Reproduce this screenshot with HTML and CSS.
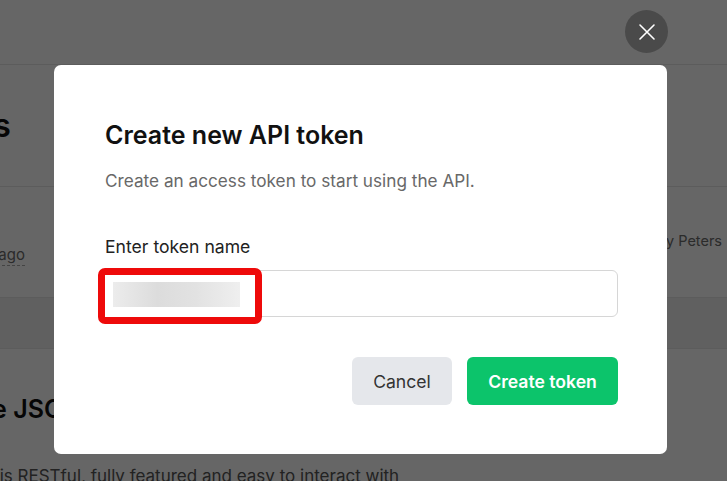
FILE: index.html
```html
<!DOCTYPE html>
<html lang="en">
<head>
<meta charset="UTF-8">
<meta name="viewport" content="width=device-width, initial-scale=1.0">
<title>API tokens</title>
<link rel="stylesheet" href="styles.css">
</head>
<body>

<!-- page behind the dialog -->
<div class="page">
  <header class="topbar"></header>

  <section class="page-head">
    <h1>API tokens</h1>
  </section>

  <div class="token-row">
    <span class="when">2 days ago</span>
    <span class="who">by Andy Peters</span>
  </div>
  <div class="token-row empty"></div>

  <section class="docs">
    <h2>Using the JSON API</h2>
    <p>The API is RESTful, fully featured and easy to interact with</p>
  </section>
</div>

<!-- dim layer + dialog -->
<div class="overlay">
  <button class="close-btn" aria-label="Close">
    <svg width="18" height="18" viewBox="0 0 18 18">
      <path d="M2 2 L16 16 M16 2 L2 16" stroke="#fff" stroke-width="1.6" stroke-linecap="round" fill="none"/>
    </svg>
  </button>

  <div class="modal">
    <h3 class="modal-title">Create new API token</h3>
    <p class="modal-sub">Create an access token to start using the API.</p>

    <label class="field-label" for="tokenName">Enter token name</label>
    <div class="field">
      <input id="tokenName" class="field-input" type="text">
      <!-- redaction mark -->
      <div class="redact"><span class="blur"></span></div>
    </div>

    <div class="actions">
      <button class="btn btn-cancel">Cancel</button>
      <button class="btn btn-create">Create token</button>
    </div>
  </div>
</div>

</body>
</html>
```

FILE: styles.css
```css
* {
  box-sizing: border-box;
}

body {
  margin: 0;
  font-family: Inter, "Noto Sans", sans-serif;
  background: #fff;
  overflow: hidden;
}

/* ---- background page ---- */
.page {
  width: 727px;
  height: 481px;
  overflow: hidden;
}

.topbar {
  height: 65px;
  border-bottom: 1px solid #e6e6e6;
}

.page-head {
  height: 122px;
  display: flex;
  align-items: center;
  margin-left: -154px;
  border-bottom: 1px solid #e6e6e6;
}
.page-head h1 {
  margin: 0;
  font-size: 32px;
  font-weight: 600;
  color: #111;
}

.token-row {
  height: 111px;
  display: flex;
  align-items: flex-end;
  justify-content: space-between;
  padding: 0 5px 31px 0;
  border-bottom: 1px solid #e6e6e6;
  margin-left: -53px;
  font-size: 15px;
  color: #6b6b6b;
}
.token-row .when {
  border-bottom: 1px dashed #aaa;
  line-height: 20px;
}
.token-row .who {
  font-size: 14.5px;
  margin-bottom: 17px;
}
.token-row.empty {
  height: 51px;
  background: #f1f1f1;
  padding: 0;
}

.docs {
  margin-left: -108px;
  padding-top: 45px;
}
.docs h2 {
  margin: 0;
  font-size: 25px;
  font-weight: 600;
  color: #111;
}
.docs p {
  margin: 42px 0 0 40px;
  font-size: 17px;
  color: #555;
  white-space: nowrap;
}

/* ---- dialog ---- */
.overlay {
  position: fixed;
  inset: 0;
  background: rgba(0, 0, 0, 0.6);
  display: flex;
  justify-content: center;
  align-items: flex-start;
  padding-top: 65px;
}

.close-btn {
  position: absolute;
  top: 10px;
  left: 625px;
  width: 43px;
  height: 43px;
  border-radius: 50%;
  border: none;
  background: #4a4a4a;
  display: flex;
  align-items: center;
  justify-content: center;
  padding: 0;
}

.modal {
  width: 613px;
  margin-left: -6px;
  background: #fff;
  border-radius: 7px;
  padding: 54px 49px 49px 51px;
}

.modal-title {
  margin: 0;
  font-size: 25px;
  line-height: 32px;
  font-weight: 600;
  color: #111;
}

.modal-sub {
  margin: 18px 0 0;
  font-size: 17.2px;
  line-height: 24px;
  color: #686868;
}

.field-label {
  display: block;
  margin-top: 42px;
  font-size: 17.6px;
  line-height: 24px;
  color: #222;
}

.field {
  position: relative;
  margin-top: 11px;
}

.field-input {
  display: block;
  width: 100%;
  height: 47px;
  border: 1px solid #d6d6d6;
  border-radius: 6px;
  font: inherit;
  padding: 0 14px;
}

.redact {
  position: absolute;
  left: -7px;
  top: -2px;
  width: 164px;
  height: 56px;
  border: 7px solid #ee0a0a;
  border-radius: 7px;
  background: #fff;
  padding: 7px 15px 10px 8px;
}
.redact .blur {
  display: block;
  width: 100%;
  height: 100%;
  background: linear-gradient(90deg, #ececec 0%, #dcdcdc 35%, #e2e2e2 65%, #efefef 100%);
}

.actions {
  display: flex;
  justify-content: flex-end;
  gap: 15px;
  margin-top: 40px;
}

.btn {
  height: 48px;
  border: none;
  border-radius: 6px;
  font-family: inherit;
  font-size: 17.6px;
}

.btn-cancel {
  width: 100px;
  background: #e5e7eb;
  color: #333;
}

.btn-create {
  width: 151px;
  background: #0cc46b;
  color: #fff;
  font-weight: 600;
}
```
